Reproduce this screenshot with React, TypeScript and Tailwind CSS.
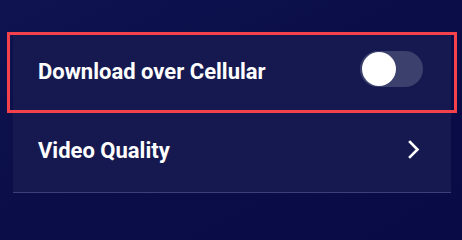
export default function App() {
  return (
    <main className="relative min-h-screen w-full overflow-hidden bg-gradient-to-br from-[#0f1350] via-[#0a0d47] to-[#080b45] pt-[35px] font-['Roboto','Liberation_Sans',sans-serif]">
      <section className="ml-[13px] w-[438px]">
        <div className="flex h-[78px] items-center justify-between border-b border-[#3b4077] bg-[#15194f] pb-[4px] pl-[25px] pr-[28px]">
          <span className="text-[22px] font-bold text-white">Download over Cellular</span>
          <div className="mb-[5px] flex h-[36px] w-[63px] items-center rounded-full bg-[#3c406d] px-[2px]">
            <div className="h-[34px] w-[34px] rounded-full bg-white" />
          </div>
        </div>
        <div className="flex h-[80px] items-center justify-between border-b border-[#3b4077] bg-[#15194f] pb-[4px] pl-[25px] pr-[31px]">
          <span className="text-[22px] font-bold text-white">Video Quality</span>
          <svg width="12" height="19" viewBox="0 0 12 19" className="mb-[2px]">
            <path d="M2 2 L9.5 9.5 L2 17" fill="none" stroke="white" strokeWidth="2.6" strokeLinecap="square" />
          </svg>
        </div>
      </section>
      <div className="absolute left-[7px] top-[32px] h-[81px] w-[450px] border-[3px] border-[#f3424b]" />
    </main>
  );
}
